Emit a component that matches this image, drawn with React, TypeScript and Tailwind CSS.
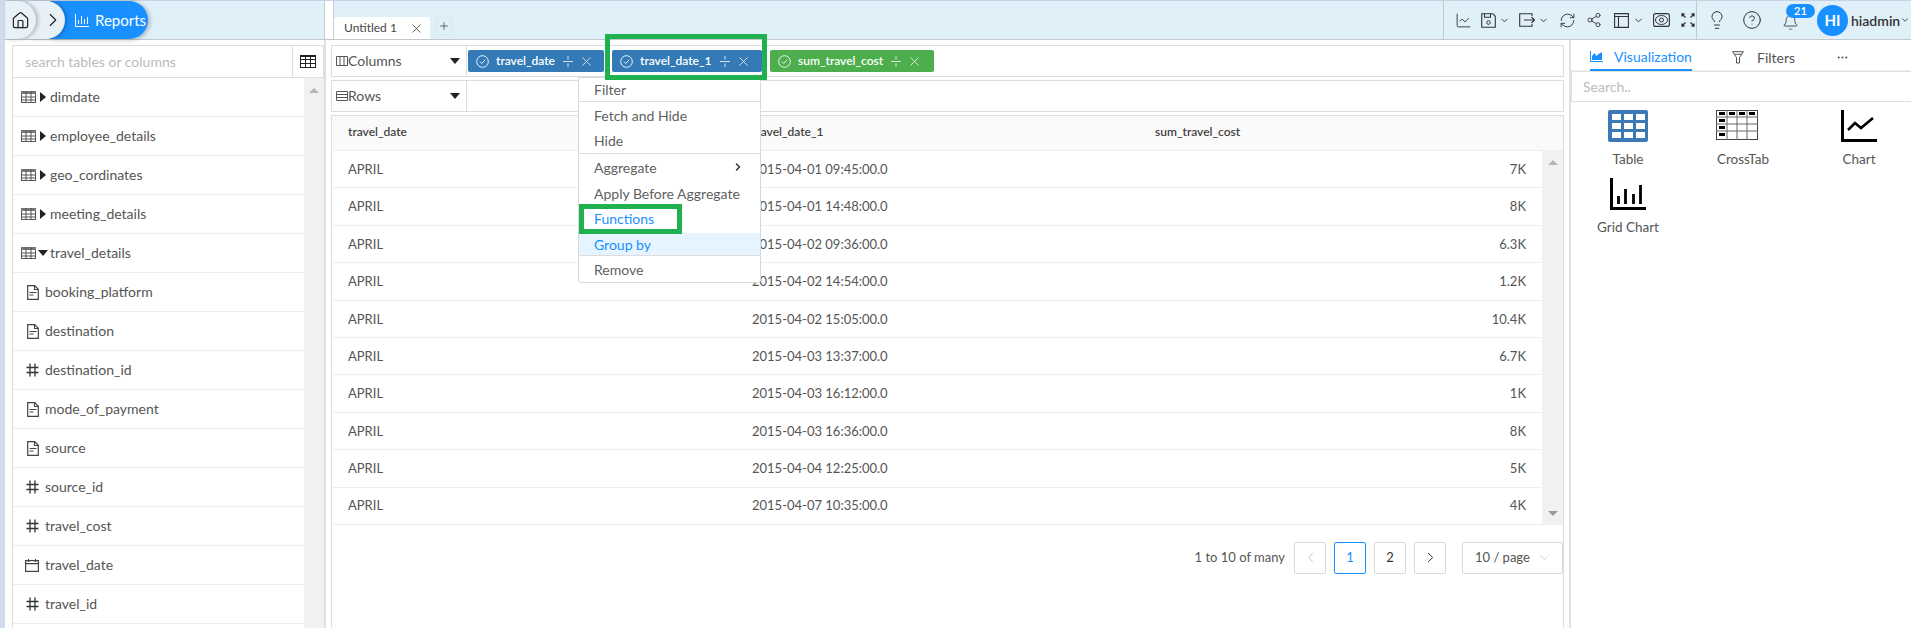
import React from "react";
import { House, ChartLine, ChevronDown, RefreshCw, Share2, Lightbulb, CircleHelp, Bell, ChevronLeft, ChevronRight, X, Plus, Ellipsis } from "lucide-react";

const TableGlyph = () => (
  <svg width="15" height="12" viewBox="0 0 15 12" className="shrink-0">
    <rect x="0.5" y="0.5" width="14" height="11" fill="#fff" stroke="#555" />
    <rect x="0" y="0" width="15" height="3" fill="#777" />
    <path d="M5 0v12M10 0v12M0 6h15M0 9h15" stroke="#555" strokeWidth="1" />
  </svg>
);
const DocGlyph = () => (
  <svg width="12" height="15" viewBox="0 0 12 15" className="shrink-0">
    <path d="M.7.7h7l3.6 3.6v10H.7z" fill="none" stroke="#444" strokeWidth="1.2" />
    <path d="M7.5.7v3.8h3.8M2.5 7.5h7M2.5 10h4" fill="none" stroke="#444" strokeWidth="1.1" />
  </svg>
);
const HashGlyph = () => (
  <svg width="13" height="14" viewBox="0 0 13 14" className="shrink-0">
    <path d="M4 .5v13M9 .5v13M.5 4.500h12M.5 9.500h12" stroke="#333" strokeWidth="1.3" fill="none" />
  </svg>
);
const CalGlyph = () => (
  <svg width="14" height="13" viewBox="0 0 14 13" className="shrink-0">
    <rect x=".6" y="1.6" width="12.8" height="10.8" fill="none" stroke="#444" strokeWidth="1.2" />
    <path d="M.6 4.6h12.8M3.5 0v3M10.5 0v3" stroke="#444" strokeWidth="1.2" fill="none" />
  </svg>
);
const DragGlyph = () => (
  <svg width="10" height="13" viewBox="0 0 10 13" className="shrink-0">
    <path d="M0 6.500h10M5 1v3.500M5 8.500V12" stroke="#fff" strokeWidth="1" opacity=".8" fill="none" />
  </svg>
);
const CheckCircle = () => (
  <svg width="13" height="13" viewBox="0 0 13 13" className="shrink-0">
    <circle cx="6.500" cy="6.500" r="5.800" fill="none" stroke="#fff" strokeWidth=".9" />
    <path d="M4 6.700l1.800 1.800 3.400-3.800" fill="none" stroke="#fff" strokeWidth=".9" />
  </svg>
);

const fields: [string, React.ReactNode][] = [
  ["booking_platform", <DocGlyph />],
  ["destination", <DocGlyph />],
  ["destination_id", <HashGlyph />],
  ["mode_of_payment", <DocGlyph />],
  ["source", <DocGlyph />],
  ["source_id", <HashGlyph />],
  ["travel_cost", <HashGlyph />],
  ["travel_date", <CalGlyph />],
  ["travel_id", <HashGlyph />],
];
const tables = ["dimdate", "employee_details", "geo_cordinates", "meeting_details"];
const rows = [
  ["2015-04-01 09:45:00.0", "7K"],
  ["2015-04-01 14:48:00.0", "8K"],
  ["2015-04-02 09:36:00.0", "6.3K"],
  ["2015-04-02 14:54:00.0", "1.2K"],
  ["2015-04-02 15:05:00.0", "10.4K"],
  ["2015-04-03 13:37:00.0", "6.7K"],
  ["2015-04-03 16:12:00.0", "1K"],
  ["2015-04-03 16:36:00.0", "8K"],
  ["2015-04-04 12:25:00.0", "5K"],
  ["2015-04-07 10:35:00.0", "4K"],
];

function Chip({ label, color, width }: { label: string; color: string; width: string }) {
  return (
    <div className={`flex h-[22px] items-center rounded-[2px] pl-2 text-[12px] font-semibold text-white ${color} ${width}`}>
      <CheckCircle />
      <span className="ml-[7px] mr-[8px] whitespace-nowrap">{label}</span>
      <DragGlyph />
      <X size={15} strokeWidth={1.2} className="ml-[6px] shrink-0" />
    </div>
  );
}

function Menu() {
  const item = "flex items-center pl-[15px] pr-4 text-[14px] text-[#5f5f5f]";
  return (
    <div className="absolute left-[573px] top-[37px] z-10 w-[183px] rounded-b-[3px] border border-[#d9d9d9] bg-white">
      <div className={`${item} h-[24px] border-b border-[#ddd]`}>Filter</div>
      <div className={`${item} mt-[1px] h-[25px]`}>Fetch and Hide</div>
      <div className={`${item} h-[26px] border-b border-[#ddd]`}>Hide</div>
      <div className={`${item} h-[26px] justify-between`}>
        Aggregate
        <ChevronRight size={12} strokeWidth={3} className="text-[#333]" />
      </div>
      <div className={`${item} h-[27px]`}>Apply Before Aggregate</div>
      <div className="flex h-[26px] items-center pb-[4px] pl-[15px] text-[14px] text-[#1890ff]">Functions</div>
      <div className="flex h-[23px] items-center border-b border-[#ddd] bg-[#e6f4ff] pl-[15px] text-[14px] text-[#1890ff]">Group by</div>
      <div className={`${item} h-[26px]`}>Remove</div>
    </div>
  );
}

export default function App() {
  return (
    <div className="flex h-[628px] w-[1911px] overflow-hidden bg-white font-['Lato',sans-serif] text-[#555]">
      <div className="w-[5px] shrink-0 bg-[#d0dbeb]" />
      <div className="relative flex min-w-0 flex-1 flex-col">
        {/* top bar */}
        <header className="flex h-[40px] shrink-0 border-y border-t-[#c7d2e4] border-b-[#c4c8cc] bg-[#e0f0f9]">
          <div className="flex w-[320px] items-center border-r border-[#c9ccd0]">
            <div className="z-20 flex h-[38px] w-[31px] items-center justify-center rounded-r-[19px] bg-[#e8f1f8] shadow-[2px_0_4px_rgba(0,0,0,0.25)]">
              <House size={19} strokeWidth={1.5} className="text-[#222]" />
            </div>
            <div className="z-10 -ml-[8px] flex h-[38px] w-[37px] items-center justify-center rounded-r-[19px] bg-[#e8f1f8] pl-3 shadow-[2px_0_4px_rgba(0,0,0,0.25)]">
              <ChevronRight size={22} strokeWidth={1.2} className="text-[#222]" />
            </div>
            <div className="-ml-[15px] flex h-[38px] w-[98px] items-center gap-[6px] rounded-r-[19px] bg-[#1890ff] pl-[25px] text-[15px] text-white shadow-[2px_1px_4px_rgba(0,0,0,0.25)]">
              <svg width="14" height="13" viewBox="0 0 14 13" className="shrink-0"><path d="M.5 0v12.500H14M3.500 10V6M6.500 10V2M9.500 10V5M12.500 10V3" stroke="#fff" fill="none" /></svg>
              Reports
            </div>
          </div>
          <div className="flex w-[8px] bg-white" />
          <div className="flex min-w-0 flex-1 items-end border-l border-[#c9ccd0]">
            <div className="flex h-[22px] w-[96px] items-center rounded-t-[3px] bg-white pl-[10px] text-[12px] text-[#444]">
              Untitled 1
              <X size={15} strokeWidth={1.2} className="ml-[12px] text-[#333]" />
            </div>
            <div className="mb-[4px] ml-[6px] flex h-[18px] w-[16px] items-center justify-center border border-[#d8e6ee]">
              <Plus size={12} strokeWidth={1.5} className="text-[#444]" />
            </div>
            <div className="ml-auto flex h-full w-[468px] items-center">
              <div className="flex h-full flex-1 items-center border-x border-[#c4c8cc] pl-[11px] text-[#333]">
                <ChartLine size={17} strokeWidth={1.3} />
                <svg width="15" height="15" viewBox="0 0 15 15" className="ml-[9px]"><path d="M.7.7h11l2.600 2.600v11H.7zM3.500.7v3.500h6V.7" fill="none" stroke="#333" strokeWidth="1.1" /><circle cx="7.500" cy="9.500" r="1.800" fill="none" stroke="#333" /></svg>
                <ChevronDown size={11} className="ml-[3px]" />
                <svg width="16" height="14" viewBox="0 0 16 14" className="ml-[9px]"><path d="M13 3V.7H.7v12.600H13V11M5 7h10.500M12.500 4l3 3-3 3" fill="none" stroke="#333" strokeWidth="1.1" /></svg>
                <ChevronDown size={11} className="ml-[3px]" />
                <RefreshCw size={17} strokeWidth={1.3} className="ml-[10px]" />
                <Share2 size={16} strokeWidth={1.3} className="ml-[10px]" />
                <svg width="15" height="15" viewBox="0 0 15 15" className="ml-[12px]"><path d="M.6.6h13.800v13.800H.6zM.6 3.500h13.800M4.500 3.500v10.900" fill="none" stroke="#333" strokeWidth="1.1" /></svg>
                <ChevronDown size={11} className="ml-[4px]" />
                <svg width="17" height="14" viewBox="0 0 17 14" className="ml-[9px]"><rect x=".6" y=".6" width="15.800" height="12.800" rx="2" fill="none" stroke="#333" strokeWidth="1.1" /><ellipse cx="8.500" cy="7" rx="6" ry="4.500" fill="none" stroke="#333" /><circle cx="8.500" cy="7" r="2" fill="none" stroke="#333" /></svg>
                <svg width="14" height="14" viewBox="0 0 14 14" className="ml-[11px]"><path d="M1 1l3.500 3.500M13 1L9.500 4.500M1 13l3.500-3.500M13 13L9.500 9.500M1 3.500V1h2.500M13 3.500V1h-2.500M1 10.500V13h2.500M13 10.500V13h-2.500" fill="none" stroke="#333" strokeWidth="1.3" /></svg>
              </div>
              <div className="relative flex h-full w-[214px] shrink-0 items-center pl-[10px] text-[#333]">
                <Lightbulb size={20} strokeWidth={1.2} />
                <CircleHelp size={20} strokeWidth={1.2} className="ml-[15px]" />
                <Bell size={17} strokeWidth={1.2} className="ml-[20px] mt-[4px]" />
                <span className="absolute left-[89px] top-[3px] flex h-[14px] w-[29px] items-center justify-center rounded-[7px] bg-[#1890ff] text-[11px] font-semibold text-white">21</span>
                <span className="ml-[18px] flex h-[31px] w-[31px] shrink-0 items-center justify-center rounded-full bg-[#1890ff] text-[15px] font-bold text-white">HI</span>
                <span className="ml-[3px] text-[14px] font-semibold text-[#333]">hiadmin</span>
                <ChevronDown size={10} className="shrink-0" />
              </div>
            </div>
          </div>
        </header>

        <div className="relative flex min-h-0 flex-1">
          {/* left */}
          <aside className="flex w-[321px] shrink-0 flex-col border-r-2 border-[#e0e0e0] pl-[7px] pt-[5px]">
            <div className="flex h-[33px] w-[312px] shrink-0 border border-[#ddd]">
              <div className="flex flex-1 items-center pb-[1px] pl-3 text-[14px] text-[#bbb]">search tables or columns</div>
              <div className="flex w-[31px] items-center justify-center border-l border-[#ddd]">
                <svg width="16" height="13" viewBox="0 0 16 13"><rect x=".5" y=".5" width="15" height="12" fill="none" stroke="#222" /><path d="M5.500 0v13M10.500 0v13M0 4.500h16M0 8.500h16" stroke="#222" /><rect width="16" height="2" fill="#222" /></svg>
              </div>
            </div>
            <div className="flex min-h-0 flex-1 border-l border-[#ddd]">
              <div className="w-[291px] shrink-0">
                {tables.map((t) => (
                  <div key={t} className="flex h-[39px] items-center border-b border-[#eee] pl-[8px] text-[14px]">
                    <TableGlyph />
                    <span className="ml-[4px] mr-[4px] h-0 w-0 border-y-[5px] border-l-[6px] border-y-transparent border-l-[#222]" />
                    <span className="pb-[2px]">{t}</span>
                  </div>
                ))}
                <div className="flex h-[39px] items-center border-b border-[#eee] pl-[8px] text-[14px]">
                  <TableGlyph />
                  <span className="ml-[2px] mr-[2px] h-0 w-0 border-x-[5px] border-t-[6px] border-x-transparent border-t-[#222]" />
                  <span className="pb-[2px]">travel_details</span>
                </div>
                {fields.map(([n, ic]) => (
                  <div key={n} className="flex h-[39px] items-center border-b border-[#eee] text-[14px]">
                    <span className="flex w-[32px] shrink-0 justify-end pr-[6px]">{ic}</span>
                    <span className="pb-[1px]">{n}</span>
                  </div>
                ))}
              </div>
              <div className="flex flex-1 justify-center bg-[#f1f1f1] pt-[10px]">
                <span className="h-0 w-0 border-x-[5px] border-b-[5px] border-x-transparent border-b-[#b5b5b5]" />
              </div>
            </div>
          </aside>

          {/* main */}
          <main className="ml-[5px] flex w-[1233px] shrink-0 flex-col pt-[5px]">
            <div className="flex h-[32px] shrink-0 items-center border border-[#ddd] bg-white">
              <div className="flex h-full w-[135px] shrink-0 items-center border-r border-[#ddd] pl-[4px] text-[14px]">
                <svg width="12" height="10" viewBox="0 0 12 10"><path d="M.5.5h11v9H.5zM4 .5v9M8 .5v9" fill="none" stroke="#555" /></svg>
                <span className="pb-[2px]">Columns</span>
                <span className="ml-auto mr-[6px] h-0 w-0 border-x-[5px] border-t-[6px] border-x-transparent border-t-[#222]" />
              </div>
              <div className="ml-[1px] flex gap-2">
                <Chip label="travel_date" color="bg-[#337ab7]" width="w-[136px]" />
                <Chip label="travel_date_1" color="bg-[#337ab7]" width="w-[150px]" />
                <Chip label="sum_travel_cost" color="bg-[#4cae4c]" width="w-[164px]" />
              </div>
            </div>
            <div className="mt-[3px] flex h-[32px] shrink-0 items-center border border-[#ddd]">
              <div className="flex h-full w-[135px] shrink-0 items-center border-r border-[#ddd] pl-[4px] text-[14px]">
                <svg width="12" height="10" viewBox="0 0 12 10"><path d="M.5.5h11v9H.5zM.5 3.500h11M.5 6.500h11" fill="none" stroke="#555" /></svg>
                <span className="pb-[2px]">Rows</span>
                <span className="ml-auto mr-[6px] h-0 w-0 border-x-[5px] border-t-[6px] border-x-transparent border-t-[#222]" />
              </div>
            </div>
            <div className="mt-[3px] flex min-h-0 flex-1 flex-col border-x border-t border-[#ddd]">
              <div className="grid h-[35px] shrink-0 grid-cols-[413px_395px_1fr] items-center border-b border-[#eee] bg-[#fafafa] pb-[2px] text-[12px] font-semibold text-[#444]">
                <span className="pl-4">travel_date</span>
                <span className="pl-[7px]">travel_date_1</span>
                <span className="pl-[15px]">sum_travel_cost</span>
              </div>
              <div className="flex shrink-0">
                <div className="flex-1">
                  {rows.map(([d, v]) => (
                    <div key={d} className="grid h-[37.4px] grid-cols-[413px_395px_1fr] items-center border-b border-[#eee] pt-[1px] text-[13px]">
                      <span className="pl-4">APRIL</span>
                      <span className="pl-[7px]">{d}</span>
                      <span className="pr-4 text-right">{v}</span>
                    </div>
                  ))}
                </div>
                <div className="flex w-[21px] flex-col items-center justify-between bg-[#f1f1f1] py-[9px]">
                  <span className="h-0 w-0 border-x-[5px] border-b-[5px] border-x-transparent border-b-[#b5b5b5]" />
                  <span className="h-0 w-0 border-x-[5px] border-t-[5px] border-x-transparent border-t-[#9a9a9a]" />
                </div>
              </div>
              <div className="mt-[17px] flex items-center justify-end gap-2 text-[13px]">
                <span className="mr-[1px]">1 to 10 of many</span>
                <span className="flex h-[32px] w-[32px] items-center justify-center rounded-[2px] border border-[#d9d9d9] text-[#bbb]"><ChevronLeft size={17} strokeWidth={1.2} /></span>
                <span className="flex h-[32px] w-[32px] items-center justify-center rounded-[2px] border border-[#1890ff] text-[#1890ff]">1</span>
                <span className="flex h-[32px] w-[32px] items-center justify-center rounded-[2px] border border-[#d9d9d9] text-[#333]">2</span>
                <span className="flex h-[32px] w-[32px] items-center justify-center rounded-[2px] border border-[#d9d9d9] text-[#222]"><ChevronRight size={17} strokeWidth={1.3} /></span>
                <span className="ml-2 flex h-[32px] w-[101px] items-center justify-between rounded-[2px] border border-[#d9d9d9] pl-[12px] pr-[10px]">10 / page<ChevronDown size={15} strokeWidth={1} className="text-[#bbb]" /></span>
              </div>
            </div>
          </main>

          {/* right */}
          <aside className="ml-[5px] flex min-w-0 flex-1 flex-col border-l-2 border-[#e0e0e0] pt-[5px]">
            <div className="flex h-[26px] shrink-0 items-center border-b border-[#eee] pl-[19px] text-[14px]">
              <div className="flex h-[26px] w-[102px] items-center gap-[11px] border-b-2 border-[#1890ff] text-[#1890ff]">
                <svg width="13" height="11" viewBox="0 0 13 11"><path d="M.5 0v10.500H13" fill="none" stroke="#1890ff" /><path d="M2 9V5l2.500-3 2 3 2-2L12 1v8z" fill="#1890ff" /></svg>
                Visualization
              </div>
              <svg width="12" height="13" viewBox="0 0 12 13" className="ml-[40px]"><path d="M.5.7h11L7.500 6.500V12h-3V6.500z M2 3.300h8" fill="none" stroke="#555" /></svg>
              <span className="ml-[13px]">Filters</span>
              <Ellipsis size={13} className="ml-[41px]" />
            </div>
            <div className="flex h-[31px] shrink-0 items-center border-y border-l border-[#e0e0e0] pl-[11px] text-[14px] text-[#bbb]">Search..</div>
            <div className="mt-[7px] grid grid-cols-[114px_116px_116px] text-center text-[13.5px]">
              <div className="flex h-[60px] flex-col items-center justify-between pt-[1px]">
                <svg width="40" height="32" viewBox="0 0 40 32"><rect width="40" height="32" rx="2" fill="#3b7ab5" /><g fill="#fff"><rect x="4" y="4" width="9" height="6" /><rect x="16" y="4" width="9" height="6" /><rect x="28" y="4" width="9" height="6" /><rect x="4" y="13" width="9" height="6" /><rect x="16" y="13" width="9" height="6" /><rect x="28" y="13" width="9" height="6" /><rect x="4" y="22" width="9" height="6" /><rect x="16" y="22" width="9" height="6" /><rect x="28" y="22" width="9" height="6" /></g></svg>
                Table
              </div>
              <div className="flex h-[60px] flex-col items-center justify-between pt-[1px]">
                <svg width="42" height="30" viewBox="0 0 42 30" className="mr-[12px]"><rect x=".5" y=".5" width="41" height="29" fill="#fff" stroke="#444" /><path d="M0 7h42M0 14h42M0 21h42M11 0v30M21 0v30M31 0v30" stroke="#666" /><g fill="#000"><rect x="3" y="2" width="6" height="3" /><rect x="13" y="2" width="6" height="3" /><rect x="23" y="2" width="6" height="3" /><rect x="33" y="2" width="6" height="3" /><rect x="3" y="9" width="6" height="3" /><rect x="3" y="16" width="6" height="3" /><rect x="3" y="23" width="6" height="3" /></g></svg>
                CrossTab
              </div>
              <div className="flex h-[60px] flex-col items-center justify-between pt-[1px]">
                <svg width="36" height="32" viewBox="0 0 36 32"><path d="M1.500 0v30.500H36" fill="none" stroke="#000" strokeWidth="3" /><path d="M7 20l7-7 6 5 12-10" fill="none" stroke="#000" strokeWidth="2.600" /></svg>
                Chart
              </div>
            </div>
            <div className="mt-[9px] flex h-[59px] w-[114px] flex-col items-center justify-between text-center text-[13.5px]">
              <svg width="36" height="32" viewBox="0 0 36 32"><path d="M1.500 0v30.500H36" fill="none" stroke="#000" strokeWidth="3" /><path d="M8.500 26v-8M15.500 26V11M23.500 26V16M30.500 26V7" stroke="#000" strokeWidth="2.800" /></svg>
              Grid Chart
            </div>
          </aside>

          <Menu />
          <div className="pointer-events-none absolute left-[600px] top-[-6px] z-20 h-[46px] w-[162px] border-[5px] border-[#1fb04f]" />
          <div className="pointer-events-none absolute left-[574px] top-[164px] z-20 h-[30px] w-[103px] border-[5px] border-[#1fb04f]" />
        </div>
      </div>
    </div>
  );
}
